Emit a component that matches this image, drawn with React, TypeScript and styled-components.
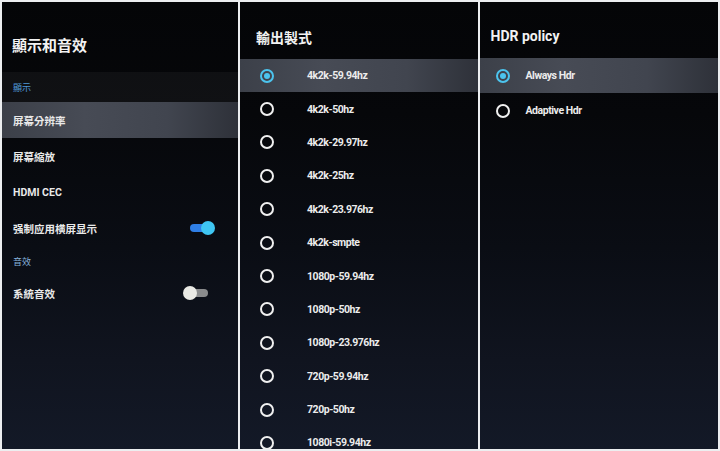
import React from 'react';
import styled, { createGlobalStyle } from 'styled-components';

const Global = createGlobalStyle`
  html, body { margin: 0; padding: 0; background: #eceef0; }
  body { font-family: Roboto, "Noto Sans CJK TC", sans-serif; -webkit-font-smoothing: antialiased; }
`;

const Screen = styled.div`
  width: 720px;
  height: 451px;
  box-sizing: border-box;
  padding: 2px;
  display: grid;
  grid-template-columns: 236px 237.5px 238.5px;
  gap: 2px;
  background: #eceef0;
`;

const Panel = styled.section`
  display: flex;
  flex-direction: column;
  overflow: hidden;
  background: linear-gradient(180deg, #040507 0%, #06070a 25%, #0a0d14 55%, #10141f 80%, #131927 100%);
`;

const Title = styled.h1<{ $h: number; $top: number; $left: number; $size: number }>`
  margin: 0;
  box-sizing: border-box;
  height: ${(p) => p.$h}px;
  flex: none;
  padding: ${(p) => p.$top}px 0 0 ${(p) => p.$left}px;
  line-height: 20px;
  font-size: ${(p) => p.$size}px;
  font-weight: 700;
  color: #f2f2f2;
`;

const Category = styled.div<{ $tint?: boolean; $color: string }>`
  height: 30px;
  flex: none;
  display: flex;
  align-items: center;
  padding-left: 11px;
  font-size: 9px;
  color: ${(p) => p.$color};
  background: ${(p) => (p.$tint ? 'rgba(255,255,255,0.045)' : 'transparent')};
`;

const highlight = `linear-gradient(90deg, #3c4049 0%, #474b55 35%, #41454f 70%, #2e3139 100%)`;

const SettingRow = styled.div<{ $selected?: boolean; $h: number }>`
  height: ${(p) => p.$h}px;
  flex: none;
  display: flex;
  align-items: center;
  justify-content: space-between;
  padding: 0 23px 0 11px;
  font-size: 10.5px;
  font-weight: 700;
  color: #e9e9e9;
  background: ${(p) => (p.$selected ? highlight : 'transparent')};
`;

const Switch = styled.span<{ $on: boolean }>`
  position: relative;
  width: 32px;
  height: 14px;
  flex: none;
  &::before {
    content: '';
    position: absolute;
    left: 7px;
    top: 3px;
    width: 18px;
    height: 8px;
    border-radius: 4px;
    background: ${(p) => (p.$on ? '#2f7fe6' : '#8a8b8c')};
  }
  &::after {
    content: '';
    position: absolute;
    top: 0;
    left: ${(p) => (p.$on ? 18 : 0)}px;
    width: 14px;
    height: 14px;
    border-radius: 50%;
    background: ${(p) => (p.$on ? '#3fc6f2' : '#e9e9e4')};
  }
`;

const OptionRow = styled.div<{ $selected?: boolean; $h: number; $pad: number; $gap: number }>`
  height: ${(p) => p.$h}px;
  flex: none;
  display: flex;
  align-items: center;
  gap: ${(p) => p.$gap}px;
  padding-left: ${(p) => p.$pad}px;
  font-size: 10.5px;
  font-weight: 700;
  color: #ececec;
  letter-spacing: -0.45px;
  background: ${(p) => (p.$selected ? highlight : 'transparent')};
`;

const Radio = styled.span<{ $checked?: boolean }>`
  box-sizing: border-box;
  width: 14px;
  height: 14px;
  flex: none;
  border-radius: 50%;
  border: 2px solid ${(p) => (p.$checked ? '#4cc4ee' : '#f0f0f0')};
  display: flex;
  align-items: center;
  justify-content: center;
  &::after {
    content: '';
    width: 6px;
    height: 6px;
    border-radius: 50%;
    background: ${(p) => (p.$checked ? '#4cc4ee' : 'transparent')};
  }
`;

const modes = [
  '4k2k-59.94hz',
  '4k2k-50hz',
  '4k2k-29.97hz',
  '4k2k-25hz',
  '4k2k-23.976hz',
  '4k2k-smpte',
  '1080p-59.94hz',
  '1080p-50hz',
  '1080p-23.976hz',
  '720p-59.94hz',
  '720p-50hz',
  '1080i-59.94hz',
];

const policies = ['Always Hdr', 'Adaptive Hdr'];

export default function App() {
  return (
    <>
      <Global />
      <Screen>
        <Panel>
          <Title $h={70} $top={34} $left={10} $size={15}>顯示和音效</Title>
          <Category $tint $color="#4f98d6">顯示</Category>
          <SettingRow $selected $h={36}>屏幕分辨率</SettingRow>
          <SettingRow $h={37}>屏幕縮放</SettingRow>
          <SettingRow $h={35}>HDMI CEC</SettingRow>
          <SettingRow $h={36}>
            强制应用横屏显示
            <Switch $on />
          </SettingRow>
          <Category $color="#86b2dc">音效</Category>
          <SettingRow $h={34}>
            系統音效
            <Switch $on={false} />
          </SettingRow>
        </Panel>
        <Panel>
          <Title $h={57} $top={26} $left={16} $size={14}>輸出製式</Title>
          {modes.map((m, i) => (
            <OptionRow key={m} $selected={i === 0} $h={33.4} $pad={20} $gap={33}>
              <Radio $checked={i === 0} />
              {m}
            </OptionRow>
          ))}
        </Panel>
        <Panel>
          <Title $h={56} $top={24} $left={11} $size={14}>HDR policy</Title>
          {policies.map((p, i) => (
            <OptionRow key={p} $selected={i === 0} $h={35} $pad={16} $gap={16}>
              <Radio $checked={i === 0} />
              {p}
            </OptionRow>
          ))}
        </Panel>
      </Screen>
    </>
  );
}
